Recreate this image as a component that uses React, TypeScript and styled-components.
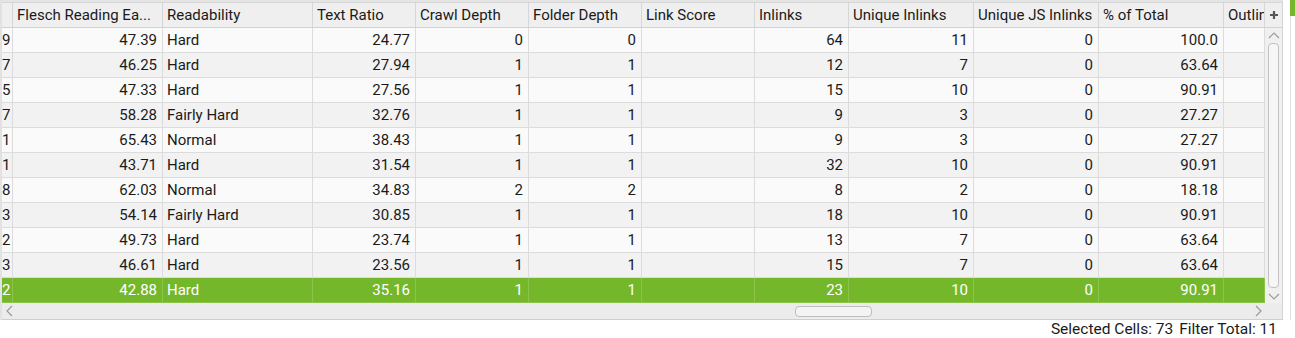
import styled, { createGlobalStyle } from "styled-components";

const GlobalStyle = createGlobalStyle`
    html, body {
        margin: 0;
        padding: 0;
        background: #ffffff;
    }
    body {
        font-family: Roboto, "Liberation Sans", sans-serif;
        font-size: 15px;
        color: #1c1c1c;
    }
`;

type Column = {
    title: string;
    width: number;
    align: "left" | "right";
};

const columns: Column[] = [
    { title: "", width: 11, align: "left" },
    { title: "Flesch Reading Ea...", width: 150, align: "right" },
    { title: "Readability", width: 150, align: "left" },
    { title: "Text Ratio", width: 103, align: "right" },
    { title: "Crawl Depth", width: 113, align: "right" },
    { title: "Folder Depth", width: 113, align: "right" },
    { title: "Link Score", width: 113, align: "right" },
    { title: "Inlinks", width: 94, align: "right" },
    { title: "Unique Inlinks", width: 125, align: "right" },
    { title: "Unique JS Inlinks", width: 125, align: "right" },
    { title: "% of Total", width: 125, align: "right" },
    { title: "Outlinks", width: 41, align: "right" },
];

const rows: string[][] = [
    ["9", "47.39", "Hard", "24.77", "0", "0", "", "64", "11", "0", "100.0", ""],
    ["7", "46.25", "Hard", "27.94", "1", "1", "", "12", "7", "0", "63.64", ""],
    ["5", "47.33", "Hard", "27.56", "1", "1", "", "15", "10", "0", "90.91", ""],
    ["7", "58.28", "Fairly Hard", "32.76", "1", "1", "", "9", "3", "0", "27.27", ""],
    ["1", "65.43", "Normal", "38.43", "1", "1", "", "9", "3", "0", "27.27", ""],
    ["1", "43.71", "Hard", "31.54", "1", "1", "", "32", "10", "0", "90.91", ""],
    ["8", "62.03", "Normal", "34.83", "2", "2", "", "8", "2", "0", "18.18", ""],
    ["3", "54.14", "Fairly Hard", "30.85", "1", "1", "", "18", "10", "0", "90.91", ""],
    ["2", "49.73", "Hard", "23.74", "1", "1", "", "13", "7", "0", "63.64", ""],
    ["3", "46.61", "Hard", "23.56", "1", "1", "", "15", "7", "0", "63.64", ""],
    ["2", "42.88", "Hard", "35.16", "1", "1", "", "23", "10", "0", "90.91", ""],
];

const selectedRow = 10;
const template = columns.map((c) => `${c.width}px`).join(" ");

function App() {
    return (
        <>
            <GlobalStyle />
            <Page>
                <TopArea>
                    <Main>
                        <TableArea>
                            <Grid>
                                <HeaderRow $template={template}>
                                    {columns.map((c, i) => (
                                        <HeaderCell key={i}>{c.title}</HeaderCell>
                                    ))}
                                </HeaderRow>
                                {rows.map((r, ri) => (
                                    <Row
                                        key={ri}
                                        $template={template}
                                        $alt={ri % 2 === 1}
                                        $selected={ri === selectedRow}
                                    >
                                        {r.map((v, ci) => (
                                            <Cell
                                                key={ci}
                                                $align={columns[ci].align}
                                                $first={ci === 0}
                                                $selected={ri === selectedRow}
                                            >
                                                {v}
                                            </Cell>
                                        ))}
                                    </Row>
                                ))}
                            </Grid>
                            <VScroll>
                                <PlusButton>
                                    <svg width="10" height="10" viewBox="0 0 10 10">
                                        <path d="M5 1v8M1 5h8" stroke="#555" strokeWidth="2.2" />
                                    </svg>
                                </PlusButton>
                                <ArrowBox>
                                    <svg width="12" height="7" viewBox="0 0 12 7">
                                        <path d="M1 6l5-5 5 5" stroke="#9a9a9a" strokeWidth="1.2" fill="none" />
                                    </svg>
                                </ArrowBox>
                                <VThumbTrack>
                                    <VThumb />
                                </VThumbTrack>
                                <ArrowBox>
                                    <svg width="12" height="7" viewBox="0 0 12 7">
                                        <path d="M1 1l5 5 5-5" stroke="#9a9a9a" strokeWidth="1.2" fill="none" />
                                    </svg>
                                </ArrowBox>
                            </VScroll>
                        </TableArea>
                        <HScroll>
                            <HArrow>
                                <svg width="7" height="12" viewBox="0 0 7 12">
                                    <path d="M6 1L1 6l5 5" stroke="#9a9a9a" strokeWidth="1.2" fill="none" />
                                </svg>
                            </HArrow>
                            <HTrack>
                                <HThumb />
                            </HTrack>
                            <HArrow>
                                <svg width="7" height="12" viewBox="0 0 7 12">
                                    <path d="M1 1l5 5-5 5" stroke="#9a9a9a" strokeWidth="1.2" fill="none" />
                                </svg>
                            </HArrow>
                            <Corner />
                        </HScroll>
                    </Main>
                    <RightStrip>
                        <StripGap />
                        <StripLine>
                            <GreenTab />
                        </StripLine>
                    </RightStrip>
                </TopArea>
                <StatusBar>
                    <StatusText>Selected Cells: 73</StatusText>
                    <StatusText>Filter Total: 11</StatusText>
                </StatusBar>
            </Page>
        </>
    );
}

const Page = styled.div`
    width: 1295px;
    height: 338px;
    display: flex;
    flex-direction: column;
    overflow: hidden;
    background: #ffffff;
`;

const TopArea = styled.div`
    display: flex;
    height: 320px;
`;

const Main = styled.div`
    width: 1283px;
    display: flex;
    flex-direction: column;
    border-top: 2px solid #e4e4e4;
    border-left: 2px solid #e2e2e2;
    box-sizing: border-box;
`;

const TableArea = styled.div`
    display: flex;
    height: 301px;
`;

const Grid = styled.div`
    width: 1263px;
    overflow: hidden;
    display: flex;
    flex-direction: column;
`;

const HeaderRow = styled.div<{ $template: string }>`
    display: grid;
    grid-template-columns: ${(p) => p.$template};
    height: 26px;
    background: #efefef;
    border-top: 1px solid #d6d6d6;
    border-bottom: 1px solid #d2d2d2;
    box-sizing: border-box;
`;

const HeaderCell = styled.div`
    padding: 0 4px;
    line-height: 24px;
    white-space: nowrap;
    overflow: hidden;
    border-right: 1px solid #d6d6d6;
    color: #1a1a1a;
`;

const Row = styled.div<{ $template: string; $alt: boolean; $selected: boolean }>`
    display: grid;
    grid-template-columns: ${(p) => p.$template};
    height: 25px;
    box-sizing: border-box;
    border-bottom: 1px solid ${(p) => (p.$selected ? "#8cc44a" : "#dcdcdc")};
    background: ${(p) => (p.$selected ? "#75b72b" : p.$alt ? "#f2f2f2" : "#fafafa")};
    color: ${(p) => (p.$selected ? "#ffffff" : "#1a1a1a")};
`;

const Cell = styled.div<{ $align: "left" | "right"; $first: boolean; $selected: boolean }>`
    padding: ${(p) => (p.$first ? "0" : "0 5px 0 4px")};
    text-align: ${(p) => p.$align};
    line-height: 24px;
    white-space: nowrap;
    overflow: hidden;
    border-right: 1px solid ${(p) => (p.$selected ? "#8cc44a" : "#dcdcdc")};
`;

const VScroll = styled.div`
    width: 18px;
    display: flex;
    flex-direction: column;
    align-items: center;
    background: #f0f0f0;
    border-right: 1px solid #d4d4d4;
    box-sizing: border-box;
`;

const PlusButton = styled.div`
    width: 100%;
    height: 26px;
    display: flex;
    align-items: center;
    justify-content: center;
    background: #efefef;
    border-top: 1px solid #d6d6d6;
    border-bottom: 1px solid #d2d2d2;
    box-sizing: border-box;
`;

const ArrowBox = styled.div`
    height: 14px;
    display: flex;
    align-items: center;
    justify-content: center;
`;

const VThumbTrack = styled.div`
    flex: 1;
    width: 100%;
    display: flex;
    justify-content: center;
    padding: 1px 0 1px;
    box-sizing: border-box;
`;

const VThumb = styled.div`
    width: 11px;
    height: 100%;
    border: 1px solid #c2c2c2;
    border-radius: 4px;
    background: #f6f6f6;
    box-sizing: border-box;
`;

const HScroll = styled.div`
    height: 17px;
    display: flex;
    align-items: center;
    background: #ececec;
    border-bottom: 1px solid #cfcfcf;
    box-sizing: border-box;
`;

const HArrow = styled.div`
    width: 14px;
    height: 100%;
    display: flex;
    align-items: center;
    justify-content: center;
`;

const HTrack = styled.div`
    flex: 1;
    height: 100%;
    display: flex;
    align-items: center;
    padding-left: 779px;
    box-sizing: border-box;
`;

const HThumb = styled.div`
    width: 77px;
    height: 11px;
    border: 1px solid #bdbdbd;
    border-radius: 4px;
    background: #f3f3f3;
    box-sizing: border-box;
`;

const Corner = styled.div`
    width: 18px;
    height: 100%;
    background: #ececec;
    border-right: 1px solid #d4d4d4;
    box-sizing: border-box;
`;

const RightStrip = styled.div`
    flex: 1;
    display: flex;
    background: #ffffff;
`;

const StripGap = styled.div`
    width: 7px;
`;

const StripLine = styled.div`
    flex: 1;
    border-left: 1px solid #e2e2e2;
    margin-top: 15px;
    position: relative;
`;

const GreenTab = styled.div`
    position: absolute;
    top: -15px;
    left: -1px;
    width: 5px;
    height: 16px;
    background: #75b72b;
`;

const StatusBar = styled.div`
    flex: 1;
    display: flex;
    justify-content: flex-end;
    align-items: center;
    gap: 6px;
    padding-right: 18px;
    background: #ffffff;
`;

const StatusText = styled.div`
    font-size: 15.5px;
    color: #1a1a1a;
    line-height: 18px;
`;

export default App;
